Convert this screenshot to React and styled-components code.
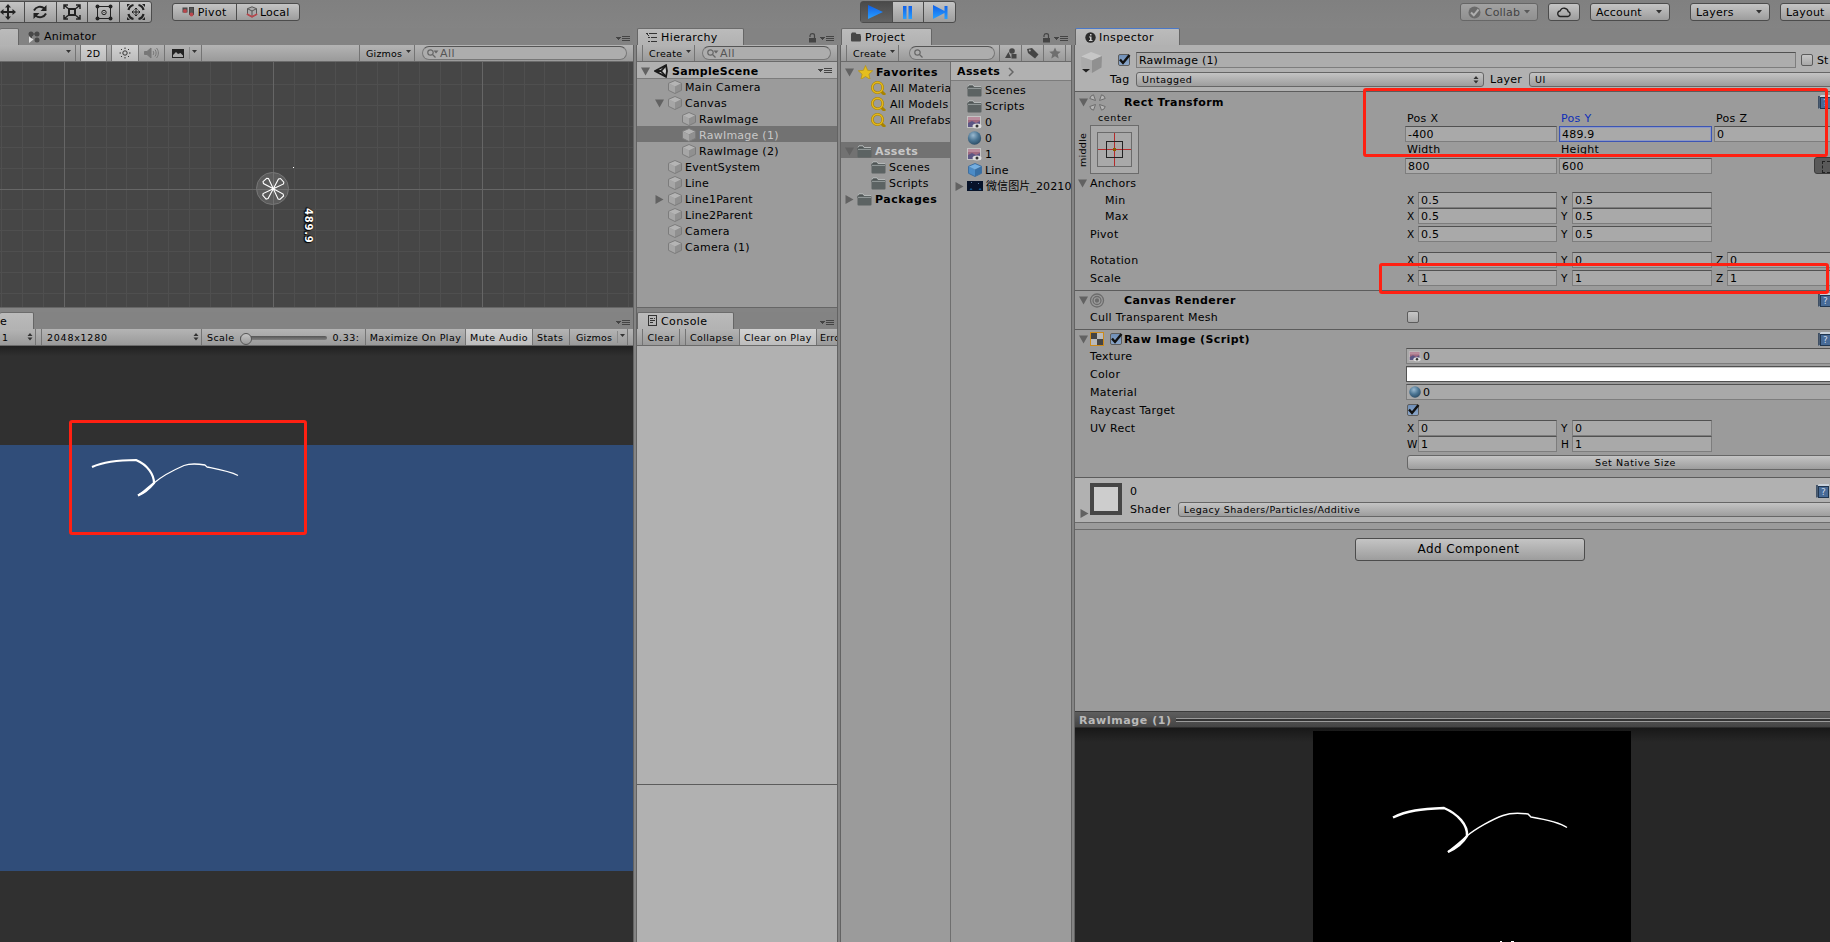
import styled, { createGlobalStyle, css } from "styled-components";

const FONT = '"DejaVu Sans", "Noto Sans CJK SC", sans-serif';

function App() {
  return (
    <>
      <GlobalStyle />
      <Editor>
        <TopBar />
        <Workspace>
          <LeftColumn>
            <SceneView />
            <GameView />
          </LeftColumn>
          <MiddleColumn>
            <Hierarchy />
            <Console />
          </MiddleColumn>
          <Project />
          <Inspector />
        </Workspace>
        <RedBox $x={69} $y={420} $w={238} $h={115} />
        <RedBox $x={1363} $y={88} $w={465} $h={69} />
        <RedBox $x={1379} $y={263} $w={450} $h={31} />
      </Editor>
    </>
  );
}

export default App;

/* ---------- top bar ---------- */

function TopBar() {
  return (
    <TopBarRow>
      <ButtonGroup $h={22} $w={160} $ml={-8}>
        <ToolButton><MoveIcon /></ToolButton>
        <ToolButton><RotateIcon /></ToolButton>
        <ToolButton><ScaleIcon /></ToolButton>
        <ToolButton><RectIcon /></ToolButton>
        <ToolButton><TransformIcon /></ToolButton>
      </ButtonGroup>
      <ButtonGroup $h={18} $w={128} $ml={20}>
        <ToolButton>
          <PivotIcon />
          <Text $ls={0.4}>Pivot</Text>
        </ToolButton>
        <ToolButton $tight>
          <LocalIcon />
          <Text $ls={0.2}>Local</Text>
        </ToolButton>
      </ButtonGroup>
      <ButtonGroup $h={22} $w={96} $ml={560}>
        <ToolButton $on><PlayIcon kind="play" /></ToolButton>
        <ToolButton><PlayIcon kind="pause" /></ToolButton>
        <ToolButton><PlayIcon kind="step" /></ToolButton>
      </ButtonGroup>
      <ButtonGroup $h={18} $w={78} $ml={504} $faded>
        <ToolButton>
          <CheckCircle />
          <Text $ls={0.2}>Collab</Text>
          <Caret />
        </ToolButton>
      </ButtonGroup>
      <ButtonGroup $h={18} $w={32} $ml={10}>
        <ToolButton><CloudIcon /></ToolButton>
      </ButtonGroup>
      <DropButton $w={80} $ml={10}><Text $ls={0.2}>Account</Text><Caret /></DropButton>
      <DropButton $w={80} $ml={20}><Text $ls={0.2}>Layers</Text><Caret /></DropButton>
      <DropButton $w={80} $ml={10}><Text $ls={0.2}>Layout</Text><Caret /></DropButton>
    </TopBarRow>
  );
}

/* ---------- scene + game ---------- */

function SceneView() {
  return (
    <Pane $h={280}>
      <TabRow>
        <Tab $w={19} />
        <LooseTab>
          <AnimatorIcon />
          <Text $ls={0.2}>Animator</Text>
        </LooseTab>
        <PaneMenu />
      </TabRow>
      <Toolbar>
        <BarCell $w={76} $end><Caret small /></BarCell>
        <BarCell $w={5} />
        <BarCell $w={26} $on><Small $ls={0.4}>2D</Small></BarCell>
        <BarCell $w={5} />
        <BarCell $w={27} $on><SunIcon /></BarCell>
        <BarCell $w={26}><SpeakerIcon /></BarCell>
        <BarCell $w={37} $pl={7}><PictureIcon /><Divider /><Caret small tight /></BarCell>
        <BarCell $w={158} />
        <BarCell $w={55} $pl={6}><Small $ls={0.2}>Gizmos</Small><Caret small /></BarCell>
        <Search $w={205} $ml={7}><Magnifier menu /><Faint>All</Faint></Search>
      </Toolbar>
      <SceneCanvas>
        <SceneGrid />
        <Measure>489.9</Measure>
      </SceneCanvas>
    </Pane>
  );
}

function SceneGrid() {
  const cols = Array.from({ length: 31 }, (_, i) => Math.round(1 + i * 20.9));
  const rows = Array.from({ length: 12 }, (_, i) => Math.round(22 + i * 20.9));
  return (
    <svg width="633" height="245" shapeRendering="crispEdges">
      {cols.map((x) => (
        <rect key={x} x={x} y="0" width="1" height="245" fill="#4f4f4f" />
      ))}
      {rows.map((y) => (
        <rect key={y} x="0" y={y} width="633" height="1" fill="#4f4f4f" />
      ))}
      {[64, 273, 482].map((x) => (
        <rect key={x} x={x} y="0" width="1" height="245" fill="#666" />
      ))}
      <rect x="0" y="127" width="633" height="1" fill="#666" />
      <rect x="293" y="105" width="1" height="1" fill="#fff" />
      <g shapeRendering="auto">
        <circle cx="272.5" cy="126.500" r="16" fill="#8a8a8a55" stroke="#777" />
        {[0, 90, 180, 270].map((a) => (
          <path
            key={a}
            transform={`rotate(${a} 273.300 126.800)`}
            d="M273.300 126.800L278.500 117L280.500 116.500L283.800 120.200L283.500 122Z"
            fill="none"
            stroke="#fff"
            strokeWidth="1.100"
          />
        ))}
      </g>
    </svg>
  );
}

function GameView() {
  return (
    <Pane $grow $gap={4}>
      <TabRow>
        <Tab $w={34}><Text>e</Text></Tab>
        <PaneMenu />
      </TabRow>
      <Toolbar>
        <BarCell $w={36} $pl={2}><Small>1</Small><Push /><UpDown /></BarCell>
        <BarCell $w={6} />
        <BarCell $w={160} $pl={5}><Small $ls={0.75}>2048x1280</Small><Push /><UpDown /></BarCell>
        <BarCell $w={164} $pl={5}>
          <Small $ls={0.4}>Scale</Small>
          <Slider />
          <Small $ls={0.5}>0.33:</Small>
        </BarCell>
        <BarCell $w={100}><Small $ls={0.45}>Maximize On Play</Small></BarCell>
        <BarCell $w={67} $on><Small $ls={0.4}>Mute Audio</Small></BarCell>
        <BarCell $w={37} $pl={4}><Small $ls={0.4}>Stats</Small></BarCell>
        <BarCell $w={58} $pl={6}><Small $ls={0.2}>Gizmos</Small><Divider /><Caret small tight /></BarCell>
      </Toolbar>
      <GameCanvas>
        <GameScreen>
          <svg width="633" height="426" fill="none" stroke="#fff">
            <path strokeWidth="2.200" d="M92 22C103 17 115 15 136 15C148 20 154 30 154 38C149 44 144 48 138 50.500" />
            <path strokeWidth="1.800" d="M138 50.500C146 46 149 41 154 38" />
            <path strokeWidth="1.300" d="M154 38C162 31 176 24 184 20.500C191 18 199 19 205 20L207 22C217 24 229 26 238 30.500" />
          </svg>
        </GameScreen>
      </GameCanvas>
    </Pane>
  );
}

/* ---------- hierarchy + console ---------- */

const objects = [
  { name: "Main Camera", depth: 0 },
  { name: "Canvas", depth: 0, fold: "open" },
  { name: "RawImage", depth: 1 },
  { name: "RawImage (1)", depth: 1, selected: true },
  { name: "RawImage (2)", depth: 1 },
  { name: "EventSystem", depth: 0 },
  { name: "Line", depth: 0 },
  { name: "Line1Parent", depth: 0, fold: "closed" },
  { name: "Line2Parent", depth: 0 },
  { name: "Camera", depth: 0 },
  { name: "Camera (1)", depth: 0 },
];

function Hierarchy() {
  return (
    <Pane $h={280}>
      <TabRow>
        <Tab $w={107} $pl={8}><HierarchyIcon /><Text $ls={0.4}>Hierarchy</Text></Tab>
        <LockIcon />
        <PaneMenu inline />
      </TabRow>
      <Toolbar>
        <BarCell $w={6} />
        <BarCell $w={52} $pl={6}><Small $ls={0.3}>Create</Small><Caret small /></BarCell>
        <Search $w={129} $ml={7}><Magnifier menu /><Faint>All</Faint></Search>
      </Toolbar>
      <SceneRow>
        <Fold open />
        <UnityIcon />
        <Text $bold $ls={0.3}>SampleScene</Text>
        <Push />
        <MenuIcon />
      </SceneRow>
      <List>
        {objects.map((o) => (
          <ListRow key={o.name} $pl={18 + o.depth * 14} $selected={o.selected}>
            <FoldSlot $w={13}>{o.fold && <Fold open={o.fold === "open"} />}</FoldSlot>
            <CubeIcon />
            <Text $ls={0.25}>{o.name}</Text>
          </ListRow>
        ))}
      </List>
    </Pane>
  );
}

function Console() {
  return (
    <Pane $grow $gap={4}>
      <TabRow>
        <Tab $w={97} $pl={10}><ConsoleIcon /><Text $ls={0.4}>Console</Text></Tab>
        <PaneMenu />
      </TabRow>
      <Toolbar>
        <BarCell $w={6} />
        <BarCell $w={37}><Small $ls={0.45}>Clear</Small></BarCell>
        <BarCell $w={6} />
        <BarCell $w={54} $pl={4}><Small $ls={0.4}>Collapse</Small></BarCell>
        <BarCell $w={77} $pl={4} $on><Small $ls={0.4}>Clear on Play</Small></BarCell>
        <BarCell $w={30} $pl={3}><Small $ls={0.3}>Error</Small></BarCell>
      </Toolbar>
      <ConsoleLog />
      <ConsoleDetail />
    </Pane>
  );
}

/* ---------- project ---------- */

function Project() {
  return (
    <ProjectColumn>
      <TabRow>
        <Tab $w={91} $pl={8}><FolderIcon dark /><Text $ls={0.35}>Project</Text></Tab>
        <LockIcon />
        <PaneMenu inline />
      </TabRow>
      <Toolbar>
        <BarCell $w={6} />
        <BarCell $w={52} $pl={6}><Small $ls={0.3}>Create</Small><Caret small /></BarCell>
        <Search $w={86} $ml={10}><Magnifier /></Search>
        <BarCell $w={5} />
        <BarCell $w={22}><ShapesIcon /></BarCell>
        <BarCell $w={22}><TagIcon /></BarCell>
        <BarCell $w={22}><StarIcon fill="#6f6f6f" size={12} /></BarCell>
      </Toolbar>
      <ProjectBody>
        <Tree>
          <ListRow $pl={4}>
            <FoldSlot $w={13}><Fold open /></FoldSlot>
            <StarIcon fill="#e5be1e" size={15} />
            <Text $bold $ls={0.5}>Favorites</Text>
          </ListRow>
          {["All Materials", "All Models", "All Prefabs"].map((t) => (
            <ListRow key={t} $pl={29}><SearchGold /><Text $ls={0.25}>{t}</Text></ListRow>
          ))}
          <TreeGap />
          <ListRow $pl={4} $selected>
            <FoldSlot $w={12}><Fold open /></FoldSlot>
            <FolderIcon />
            <Text $bold $ls={0.4}>Assets</Text>
          </ListRow>
          <ListRow $pl={30}><FolderIcon /><Text $ls={0.3}>Scenes</Text></ListRow>
          <ListRow $pl={30}><FolderIcon /><Text $ls={0.3}>Scripts</Text></ListRow>
          <ListRow $pl={4}>
            <FoldSlot $w={12}><Fold /></FoldSlot>
            <FolderIcon />
            <Text $bold $ls={0.5}>Packages</Text>
          </ListRow>
        </Tree>
        <Files>
          <Crumb>
            <Text $bold $ls={0.4}>Assets</Text>
            <svg width="6" height="10" fill="none" stroke="#666" strokeWidth="1.500"><path d="M1 1L5 5L1 9" /></svg>
          </Crumb>
          <ListRow $pl={16}><FolderIcon /><Text $ls={0.3}>Scenes</Text></ListRow>
          <ListRow $pl={16}><FolderIcon /><Text $ls={0.3}>Scripts</Text></ListRow>
          <ListRow $pl={16}><TextureIcon /><Text>0</Text></ListRow>
          <ListRow $pl={16}><SphereIcon /><Text>0</Text></ListRow>
          <ListRow $pl={16}><TextureIcon /><Text>1</Text></ListRow>
          <ListRow $pl={17}><CubeIcon blue /><Text $ls={0.2}>Line</Text></ListRow>
          <ListRow $pl={4}>
            <FoldSlot $w={12}><Fold /></FoldSlot>
            <NightIcon />
            <Text $ls={0.1}>微信图片_20210</Text>
          </ListRow>
        </Files>
      </ProjectBody>
    </ProjectColumn>
  );
}

/* ---------- inspector ---------- */

function Axis({ label, value }) {
  return (
    <AxisCell>
      <AxisName>{label}</AxisName>
      <Field>{value}</Field>
    </AxisCell>
  );
}

function Vector({ name, labels = ["X", "Y"], values, mt, indent }) {
  return (
    <PropRow $mt={mt}>
      <PropName $indent={indent}>{name}</PropName>
      {labels.map((l, i) => <Axis key={l} label={l} value={values[i]} />)}
    </PropRow>
  );
}

function Inspector() {
  return (
    <InspectorColumn>
      <TabRow>
        <Tab $w={105} $pl={9} $active><InfoIcon /><Text $ls={0.4}>Inspector</Text></Tab>
      </TabRow>
      <ObjectHeader>
        <BigCube />
        <HeaderRows>
          <HeaderRow $h={16}>
            <Check on />
            <NameField>RawImage (1)</NameField>
            <Check />
            <StaticLabel>St</StaticLabel>
          </HeaderRow>
          <HeaderRow $h={15}>
            <TagName>Tag</TagName>
            <Select $w={348}>Untagged<Push /><UpDown /></Select>
            <TagName $mid>Layer</TagName>
            <Select $w={310}>UI</Select>
          </HeaderRow>
        </HeaderRows>
      </ObjectHeader>

      <Section $h={199}>
        <SectionTitle $h={20}>
          <Fold open />
          <RectTransformIcon />
          <Title>Rect Transform</Title>
          <HelpIcon />
        </SectionTitle>
        <RectLayout>
          <AnchorPreset>
            <Small $ls={0.6}>center</Small>
            <AnchorRow>
              <Upright>middle</Upright>
              <AnchorBox />
            </AnchorRow>
          </AnchorPreset>
          <RectFields>
            <FieldNames><span>Pos X</span><Blue>Pos Y</Blue><span>Pos Z</span></FieldNames>
            <FieldLine><Field>-400</Field><Field $focus>489.9</Field><Field>0</Field></FieldLine>
            <FieldNames><span>Width</span><span>Height</span></FieldNames>
            <FieldLine>
              <Field>800</Field>
              <Field>600</Field>
              <BlueprintSlot><BlueprintButton /></BlueprintSlot>
            </FieldLine>
          </RectFields>
        </RectLayout>
        <AnchorsTitle><Fold open /><Text $ls={0.25}>Anchors</Text></AnchorsTitle>
        <Vector name="Min" indent values={["0.5", "0.5"]} />
        <Vector name="Max" indent values={["0.5", "0.5"]} />
        <Vector name="Pivot" mt={2} values={["0.5", "0.5"]} />
        <Vector name="Rotation" mt={10} labels={["X", "Y", "Z"]} values={["0", "0", "0"]} />
        <Vector name="Scale" mt={2} labels={["X", "Y", "Z"]} values={["1", "1", "1"]} />
      </Section>

      <Section $h={39}>
        <SectionTitle $h={18}>
          <Fold open />
          <RendererIcon />
          <Title>Canvas Renderer</Title>
          <HelpIcon />
        </SectionTitle>
        <PropRow><PropName>Cull Transparent Mesh</PropName><CheckSlot><Check /></CheckSlot></PropRow>
      </Section>

      <Section $h={148}>
        <SectionTitle $h={18}>
          <Fold open />
          <RawImageIcon />
          <CheckInline><Check on /></CheckInline>
          <Title>Raw Image (Script)</Title>
          <HelpIcon />
        </SectionTitle>
        <PropRow><PropName>Texture</PropName><ObjectField><TextureIcon small />0</ObjectField></PropRow>
        <PropRow $mt={2}><PropName>Color</PropName><ColorField /></PropRow>
        <PropRow $mt={2}><PropName>Material</PropName><ObjectField><SphereIcon small />0</ObjectField></PropRow>
        <PropRow $mt={2}><PropName>Raycast Target</PropName><CheckSlot><Check on /></CheckSlot></PropRow>
        <Vector name="UV Rect" mt={2} values={["0", "0"]} />
        <Vector name="" labels={["W", "H"]} values={["1", "1"]} />
        <PropRow $mt={2}><PropName /><WideButton><Small $ls={0.6}>Set Native Size</Small></WideButton></PropRow>
      </Section>

      <MaterialSection>
        <FoldLow><Fold /></FoldLow>
        <Swatch />
        <MaterialRows>
          <HeaderRow $h={16}><Text>0</Text><Push /><HelpIcon inset /></HeaderRow>
          <HeaderRow $h={15}><Text $ls={0.3}>Shader</Text><Select $w={656} $ml={7}>Legacy Shaders/Particles/Additive</Select></HeaderRow>
        </MaterialRows>
      </MaterialSection>
      <Rule />
      <AddArea>
        <AddButton>Add Component</AddButton>
      </AddArea>

      <PreviewBar>
        <PreviewTitle>RawImage (1)</PreviewTitle>
        <Grip />
      </PreviewBar>
      <PreviewBody>
        <PreviewImage>
          <svg width="318" height="211" fill="none" stroke="#fff">
            <path strokeWidth="2.400" d="M80 86.500C94 79.500 108 78 131 77C145 83 155 94 154 105C150 112 144 117 135 121" />
            <path strokeWidth="2" d="M135 121C143 115 148 111 154 105" />
            <path strokeWidth="1.400" d="M154 105C162 98 180 88 190 84.500C198 81.500 208 82 215 83L218 86C230 88 246 91 254 96.500" />
            <path strokeWidth="1" d="M187 210.500H189M198 210.500H201" />
          </svg>
        </PreviewImage>
      </PreviewBody>
    </InspectorColumn>
  );
}

/* ---------- icons ---------- */

function MoveIcon() {
  return (
    <svg width="16" height="16" fill="#222">
      <path d="M8 0L11 3.500H9V7H12.500V5L16 8L12.500 11V9H9V12.500H11L8 16L5 12.500H7V9H3.500V11L0 8L3.500 5V7H7V3.500H5Z" />
    </svg>
  );
}

function RotateIcon() {
  return (
    <svg width="16" height="16" fill="none" stroke="#222" strokeWidth="2">
      <path d="M2 6.500C4 2.500 9 1.500 12.500 4.500M14 9.500C12 13.500 7 14.500 3.500 11.500" />
      <path fill="#222" stroke="none" d="M14.500 1V7H8.500ZM1.500 15V9H7.500Z" />
    </svg>
  );
}

function ScaleIcon() {
  return (
    <svg width="18" height="16" fill="none" stroke="#222">
      <rect x="6" y="5" width="6" height="6" strokeWidth="2" />
      <path strokeWidth="1.500" d="M1 5V1H5M1 1L5 4.500M13 1H17V5M17 1L13 4.500M1 11V15H5M1 15L5 11.500M17 11V15H13M17 15L13 11.500" />
    </svg>
  );
}

function RectIcon() {
  return (
    <svg width="18" height="17" fill="none" stroke="#222">
      <path d="M3 2.500H15M3 14.500H15M2.500 3V14M15.500 3V14" />
      <circle cx="9" cy="8.500" r="2.200" />
      <g fill="#222" stroke="none">
        <circle cx="2.500" cy="2.500" r="2" /><circle cx="15.500" cy="2.500" r="2" />
        <circle cx="2.500" cy="14.500" r="2" /><circle cx="15.500" cy="14.500" r="2" />
      </g>
      <rect x="8.500" y="8" width="1" height="1" fill="#222" stroke="none" />
    </svg>
  );
}

function TransformIcon() {
  return (
    <svg width="20" height="18" fill="none" stroke="#222">
      <path strokeWidth="2.200" d="M2.500 7C3 4.500 5 2.500 7.500 2M12.500 2C15 2.500 17 4.500 17.500 7M17.500 11C17 13.500 15 15.500 12.500 16M7.500 16C5 15.500 3 13.500 2.500 11" />
      <path fill="#222" stroke="none" d="M1 1H4L1 4ZM19 1H16L19 4ZM1 17H4L1 14ZM19 17H16L19 14Z" />
      <path d="M10 5V13M6 9H14M8.500 6.500L10 5L11.500 6.500M8.500 11.500L10 13L11.500 11.500M7.500 7.500L6 9L7.500 10.500M12.500 7.500L14 9L12.500 10.500" />
    </svg>
  );
}

function PivotIcon() {
  return (
    <svg width="12" height="10">
      <rect x="1" y="1" width="4" height="4" fill="#555" stroke="#444" />
      <rect x="7.500" y=".5" width="4" height="7" fill="#555" stroke="#444" />
      <circle cx="3" cy="4" r="2" fill="#b8474d" />
      <circle cx="9.500" cy="7.500" r="2" fill="#b8474d" />
    </svg>
  );
}

function LocalIcon() {
  return (
    <svg width="12" height="12" fill="none" stroke="#555">
      <path fill="#aaa" d="M6 .8L10.500 2.700V8.500L6 11L1.500 8.500V2.700Z" />
      <path d="M1.500 2.700L6 5L10.500 2.700M6 5V11" />
      <path stroke="#b8474d" strokeWidth="1.600" d="M.8 8L6 10.800L11.200 8" />
    </svg>
  );
}

function PlayIcon({ kind }) {
  return (
    <svg width="18" height="16">
      <defs>
        <linearGradient id={kind} x2="0" y2="1">
          <stop offset="0" stopColor="#0f5fe8" />
          <stop offset="1" stopColor="#2aa0ff" />
        </linearGradient>
      </defs>
      {kind === "play" && <path fill={`url(#${kind})`} d="M1 1V15L16 8Z" />}
      {kind === "pause" && <path fill={`url(#${kind})`} d="M4 2H7.500V15H4ZM9.500 2H13V15H9.500Z" />}
      {kind === "step" && <path fill={`url(#${kind})`} d="M2 1V15L13.500 9V15H16.500V2H13.500V7Z" />}
    </svg>
  );
}

function CheckCircle() {
  return (
    <svg width="13" height="13">
      <circle cx="6.500" cy="6.500" r="6" fill="#555" />
      <path d="M3 6.500L5.800 9.300L10.500 3.500" fill="none" stroke="#ddd" strokeWidth="2" />
    </svg>
  );
}

function CloudIcon() {
  return (
    <svg width="16" height="12" fill="none" stroke="#222" strokeWidth="1.300">
      <path d="M4 10.500H12A2.500 2.500 0 0 0 12.200 5.600A4.200 4.200 0 0 0 4.200 4.800A2.900 2.900 0 0 0 4 10.500Z" />
    </svg>
  );
}

function Caret({ small, tight }) {
  return (
    <CaretSvg width={small ? 5 : 6} height="4" $up={small} $tight={tight}>
      <path fill="#333" d={small ? "M0 0H5L2.500 3Z" : "M0 0H6L3 3.500Z"} />
    </CaretSvg>
  );
}

function UpDown() {
  return (
    <svg width="6" height="8" fill="#333"><path d="M3 0L5.500 3H.5ZM3 7.500L5.500 4.500H.5Z" /></svg>
  );
}

function MenuIcon() {
  return (
    <svg width="14" height="7" shapeRendering="crispEdges" fill="#444">
      <path d="M0 1H5L2.500 4ZM6 0H14V1H6ZM6 2H14V3H6ZM6 4H14V5H6Z" />
    </svg>
  );
}

function PaneMenu({ inline }) {
  return <MenuSlot $inline={inline}><MenuIcon /></MenuSlot>;
}

function LockIcon() {
  return (
    <LockSvg width="9" height="10">
      <path d="M2 4V2.500C2.500 0 6.500 0 6.500 2.500V5" fill="none" stroke="#444" strokeWidth="1.200" />
      <rect x="1" y="5" width="7" height="4.500" fill="#444" />
    </LockSvg>
  );
}

function AnimatorIcon() {
  return (
    <svg width="12" height="12" fill="#484848">
      <circle cx="3" cy="3" r="2.500" /><circle cx="9" cy="3" r="2.500" /><circle cx="9" cy="9" r="2.500" />
      <path d="M2 4H4V9H2ZM3 2.500H9V3.500H3Z" />
      <path d="M1 5.500L5.500 8.500L1 12Z" fill="#ddd" />
    </svg>
  );
}

function SunIcon() {
  return (
    <svg width="12" height="12" fill="none" stroke="#333">
      <circle cx="6" cy="6" r="2.200" />
      <path d="M6 .5V2M6 10V11.500M.5 6H2M10 6H11.500M2 2L3 3M9 9L10 10M10 2L9 3M3 9L2 10" />
    </svg>
  );
}

function SpeakerIcon() {
  return (
    <svg width="15" height="12" fill="none" stroke="#777">
      <path fill="#777" d="M.5 4.500H3L7 1V11L3 7.500H.5Z" />
      <path d="M9 4C10 5 10 7 9 8M11 2.500C12.500 4.500 12.500 7.500 11 9.500M12.500 1C15 4 15 8 12.500 11" />
    </svg>
  );
}

function PictureIcon() {
  return (
    <svg width="12" height="9">
      <rect width="12" height="9" fill="#222" />
      <path d="M1 8V6L4 3L6 5L8.500 4L11 6.500V8Z" fill="#aaa" />
    </svg>
  );
}

function Magnifier({ menu }) {
  return (
    <svg width={menu ? 12 : 10} height="9" fill="none" stroke="#666" strokeWidth="1.200">
      <circle cx="3.500" cy="3.500" r="2.700" />
      <path d="M5.500 5.500L8.500 8.500" />
      {menu && <path d="M6.500 1.500H11.500L9 4.500Z" fill="#666" stroke="none" />}
    </svg>
  );
}

function HierarchyIcon() {
  return (
    <svg width="12" height="9" shapeRendering="crispEdges" fill="#333">
      <path d="M0 0H2V1H0ZM3 0H11V1H3ZM2 4H4V5H2ZM5 4H11V5H5ZM2 8H4V9H2ZM5 8H11V9H5ZM1 1H2V2H1ZM2 2H3V3H2Z" />
    </svg>
  );
}

function ConsoleIcon() {
  return (
    <svg width="10" height="12" fill="none" stroke="#333" shapeRendering="crispEdges">
      <rect x=".5" y=".5" width="8" height="10" />
      <path d="M2 3.500H5M2 5.500H7M2 7.500H5M6 3.500H7" />
    </svg>
  );
}

function Fold({ open }) {
  return (
    <svg width="9" height="9" fill="#626262">
      <path d={open ? "M0 .5H9L4.500 8.500Z" : "M.5 0V9L8.500 4.500Z"} />
    </svg>
  );
}

function CubeIcon({ blue }) {
  const c = blue ? ["#74aee0", "#4b8bc6", "#376fa5", "#3f6f9f"] : ["#b4b4b4", "#a6a6a6", "#909090", "#7c7c7c"];
  return (
    <svg width="14" height="14">
      <path d="M7 .5L13.500 3.300L7 6.500L.5 3.300Z" fill={c[0]} />
      <path d="M.5 3.300L7 6.500V13.500L.5 10.300Z" fill={c[1]} />
      <path d="M13.500 3.300L7 6.500V13.500L13.500 10.300Z" fill={c[2]} />
      <path d="M7 .5L13.500 3.300V10.300L7 13.500L.5 10.300V3.300Z" fill="none" stroke={c[3]} />
    </svg>
  );
}

function UnityIcon() {
  return (
    <svg width="14" height="14" fill="none" stroke="#1a1a1a" strokeWidth="1.800">
      <path d="M1 7L12 1.200L13 7L12 12.800Z" fill="#ccc" />
      <path d="M1 7H7L12 1.500M7 7L12 12.500" />
    </svg>
  );
}

function FolderIcon({ dark }) {
  return dark ? (
    <svg width="12" height="10" fill="#474747"><path d="M1 2L2 .5H5.500L6.500 2H10.500V3H3L1 9Z" /><rect x="1" y="3" width="10" height="6.500" rx="1" /></svg>
  ) : (
    <svg width="15" height="13">
      <path d="M.5 3L1.500 1H6L7 2.500H13.500V5H.5Z" fill="#4f5555" />
      <rect x=".5" y="3" width="14" height="9.500" rx="1" fill="#5c6363" />
      <path d="M1 4.500H14" stroke="#8f9696" />
      <path d="M1 2.500L2 .8H6L7 2.500H14" fill="none" stroke="#b4b8b8" />
    </svg>
  );
}

function ShapesIcon() {
  return (
    <svg width="12" height="11" fill="#454545">
      <circle cx="7" cy="3" r="2.800" /><path d="M0 10L3.500 4L6 10Z" /><rect x="6.500" y="6" width="5" height="4.500" />
    </svg>
  );
}

function TagIcon() {
  return (
    <svg width="12" height="11" fill="#454545">
      <path d="M0 1L5 0L11.500 6.500L8 10.500L1 5Z" /><circle cx="2.800" cy="2.500" r="1" fill="#aaa" />
    </svg>
  );
}

function StarIcon({ fill, size }) {
  return (
    <svg width={size} height={size} viewBox="0 0 14 14">
      <path d="M7 .5L9 5L13.700 5.400L10.200 8.600L11.300 13.400L7 10.800L2.700 13.400L3.800 8.600L.3 5.400L5 5Z" fill={fill} stroke={size > 12 ? "#b4921a" : "none"} strokeWidth=".7" />
    </svg>
  );
}

function SearchGold() {
  return (
    <svg width="17" height="15" fill="none">
      <path d="M10.500 9.500L15 14" stroke="#a88300" strokeWidth="3" />
      <circle cx="7.500" cy="6.500" r="5.200" stroke="#a88300" strokeWidth="2.600" />
      <circle cx="7.500" cy="6.500" r="5.200" stroke="#e3b71b" strokeWidth="1.400" />
    </svg>
  );
}

function TextureIcon({ small }) {
  return (
    <svg width={small ? 12 : 15} height={small ? 11 : 13} viewBox="0 0 15 13">
      <rect x=".5" y=".5" width="13" height="11" fill="#a06a80" stroke="#c3c3c3" />
      <path d="M1 1H13V4H1Z" fill="#b98c9c" />
      <path d="M1 7L5 5L9 7L13 5V11H1Z" fill="#5c5684" />
      <ellipse cx="10" cy="10" rx="4.500" ry="2.500" fill="#ddd" />
      <circle cx="10" cy="10" r="1.500" fill="#333" />
    </svg>
  );
}

function SphereIcon({ small }) {
  return (
    <svg width={small ? 12 : 15} height={small ? 12 : 14} viewBox="0 0 14 14">
      <defs>
        <radialGradient id="ball" cx=".4" cy=".3" r=".8">
          <stop offset="0" stopColor="#9ab9d0" /><stop offset=".5" stopColor="#4b7593" /><stop offset="1" stopColor="#24435b" />
        </radialGradient>
      </defs>
      <circle cx="7" cy="7" r="6.700" fill="url(#ball)" />
    </svg>
  );
}

function NightIcon() {
  return (
    <svg width="16" height="10">
      <rect width="16" height="10" fill="#071329" />
      <path d="M3 9L4 7.500L5 9M12 9L13 7.500L14 9" stroke="#16639f" fill="none" />
      <rect x="4" y="1" width="1" height="1" fill="#5a7ba0" /><rect x="11" y="2" width="1" height="1" fill="#5a7ba0" />
    </svg>
  );
}

function InfoIcon() {
  return (
    <svg width="11" height="11">
      <circle cx="5.500" cy="5.500" r="5.200" fill="#2c2c2c" />
      <path d="M5 2H6.500V3.500H5ZM4 4.500H6.500V8H7.500V9H4V8H5V5.500H4Z" fill="#ccc" />
    </svg>
  );
}

function BigCube() {
  return (
    <BigCubeSvg width="23" height="23">
      <path d="M11 0L22 4L12 8.500L1 4.500Z" fill="#c6c6c6" />
      <path d="M1 4.500L12 8.500V21L1.500 15.500Z" fill="#aaa" />
      <path d="M22 4L12 8.500V21L21.500 15.500Z" fill="#909090" />
      <path d="M2 17H10L6 20.500Z" fill="#222" />
    </BigCubeSvg>
  );
}

function Check({ on }) {
  return (
    <CheckBox $on={on}>
      {on && <svg width="13" height="12" fill="none" stroke="#111" strokeWidth="2.400"><path d="M2 5.500L5 9L11.500 1" /></svg>}
    </CheckBox>
  );
}

function RectTransformIcon() {
  return (
    <svg width="17" height="17" fill="#b5b5b5" stroke="#6c6c6c">
      {[0, 90, 180, 270].map((a) => (
        <path key={a} transform={`rotate(${a} 8.500 8.500)`} d="M6.500 6.500L.8 4.500L2 2L4.500 .8Z" />
      ))}
    </svg>
  );
}

function RendererIcon() {
  return (
    <svg width="16" height="15" fill="none" stroke="#6c6c6c" strokeWidth="1.300">
      <circle cx="8" cy="7.500" r="6.500" /><circle cx="8" cy="7.500" r="4" /><circle cx="8" cy="7.500" r="1.500" fill="#6c6c6c" />
    </svg>
  );
}

function RawImageIcon() {
  return (
    <svg width="16" height="14" shapeRendering="crispEdges">
      <rect x="1.500" y=".5" width="13" height="13" fill="#b9b9b9" stroke="#cd8a1a" />
      <path d="M2 1H8V7H14V13H8V7H2Z" fill="#444" />
    </svg>
  );
}

function HelpIcon({ inset }) {
  return (
    <HelpSlot $inset={inset}>
      <svg width="13" height="14">
        <path d="M1 2L3 0H13V12L11 14H1Z" fill="#c9d1da" />
        <rect x="2.500" y="2.500" width="10" height="11" fill="#476a96" stroke="#203650" />
        <path d="M1 1V13.500" stroke="#203650" strokeWidth="1.500" />
      </svg>
      <HelpMark>?</HelpMark>
    </HelpSlot>
  );
}

function AnchorBox() {
  return (
    <svg width="49" height="49" fill="none" shapeRendering="crispEdges">
      <rect x=".5" y=".5" width="48" height="48" fill="#a9a9a9" stroke="#6b6b6b" />
      <rect x="7.500" y="7.500" width="34" height="34" stroke="#6b6b6b" />
      <path d="M24.500 8V41M8 24.500H41" stroke="#b52a2a" />
      <rect x="16.500" y="16.500" width="16" height="16" stroke="#222" />
      <rect x="23" y="23" width="3" height="3" fill="#8a5a00" />
    </svg>
  );
}

/* ---------- styles ---------- */

const GlobalStyle = createGlobalStyle`
  * { box-sizing: border-box; }
  body {
    margin: 0;
    overflow: hidden;
    background: #828282;
    font-family: ${FONT};
    font-size: 11px;
    color: #000;
  }
  svg { flex: none; display: block; }
`;

const Editor = styled.div`
  position: relative;
  width: 1830px;
  height: 942px;
  overflow: hidden;
  display: flex;
  flex-direction: column;
  background: linear-gradient(#808080, #848484 30px);
`;

const Workspace = styled.div`
  flex: 1;
  display: flex;
  gap: 4px;
  min-height: 0;
  background: linear-gradient(
    90deg,
    transparent 633px,
    #636363 633px 634px,
    transparent 634px 636px,
    #636363 636px 637px,
    transparent 637px 837px,
    #636363 837px 838px,
    transparent 838px 840px,
    #636363 840px 841px,
    transparent 841px 1071px,
    #636363 1071px 1072px,
    transparent 1072px 1074px,
    #636363 1074px 1075px,
    transparent 1075px
  ) 0 17px no-repeat;
`;

const column = css`
  flex: none;
  display: flex;
  flex-direction: column;
`;

const LeftColumn = styled.div`
  ${column}
  width: 633px;
`;

const MiddleColumn = styled.div`
  ${column}
  width: 200px;
`;

const ProjectColumn = styled.div`
  ${column}
  width: 230px;
`;

const InspectorColumn = styled.div`
  ${column}
  width: 755px;
  background: linear-gradient(#838383 17px, #9b9b9b 17px);
`;

const Pane = styled.section`
  display: flex;
  flex-direction: column;
  overflow: hidden;
  min-height: 0;
  height: ${(p) => (p.$h ? p.$h + "px" : "auto")};
  flex: ${(p) => (p.$grow ? 1 : "none")};
  margin-top: ${(p) => p.$gap || 0}px;
  background: linear-gradient(#838383 17px, #9b9b9b 17px);
`;

const RedBox = styled.div`
  position: absolute;
  left: ${(p) => p.$x}px;
  top: ${(p) => p.$y}px;
  width: ${(p) => p.$w}px;
  height: ${(p) => p.$h}px;
  border: 3px solid #ff2012;
  border-radius: 3px;
`;

const Text = styled.span`
  white-space: nowrap;
  line-height: 14px;
  padding-top: 1px;
  font-size: 11px;
  font-weight: ${(p) => (p.$bold ? "bold" : "normal")};
  letter-spacing: ${(p) => p.$ls || 0}px;
`;

const Small = styled.span`
  white-space: nowrap;
  font-size: 9.500px;
  line-height: 13px;
  letter-spacing: ${(p) => p.$ls || 0}px;
`;

const Faint = styled.span`
  color: #555;
  letter-spacing: 0.4px;
`;

const Push = styled.i`
  flex: 1;
`;

const TopBarRow = styled.header`
  flex: none;
  height: 28px;
  display: flex;
  align-items: center;
  padding-bottom: 4px;
`;

const metal = css`
  background: linear-gradient(#c4c4c4, #9d9d9d);
  border: 1px solid #4c4c4c;
  border-radius: 3px;
`;

const ButtonGroup = styled.div`
  ${metal}
  flex: none;
  display: flex;
  width: ${(p) => p.$w}px;
  height: ${(p) => p.$h}px;
  margin-left: ${(p) => p.$ml}px;
  opacity: ${(p) => (p.$faded ? 0.5 : 1)};
`;

const ToolButton = styled.div`
  flex: 1 1 0;
  min-width: 0;
  display: flex;
  align-items: center;
  justify-content: center;
  gap: ${(p) => (p.$tight ? 2 : 4)}px;
  background: ${(p) => (p.$on ? "linear-gradient(#4a4a4a, #636363)" : "none")};
  & + & { border-left: 1px solid #4c4c4c; }
`;

const DropButton = styled.div`
  ${metal}
  flex: none;
  display: flex;
  align-items: center;
  justify-content: space-between;
  width: ${(p) => p.$w}px;
  height: 18px;
  margin-left: ${(p) => p.$ml}px;
  padding: 0 7px 0 5px;
`;

const CaretSvg = styled.svg`
  margin: ${(p) => (p.$tight ? "0 0 3px 2px" : p.$up ? "0 2px 3px 4px" : 0)};
`;

const TabRow = styled.div`
  flex: none;
  height: 17px;
  display: flex;
  align-items: center;
`;

const Tab = styled.div`
  display: flex;
  align-items: center;
  gap: 3px;
  height: 17px;
  width: ${(p) => p.$w}px;
  padding-left: ${(p) => p.$pl || 0}px;
  border: 1px solid #666;
  border-top-color: ${(p) => (p.$active ? "#4a78c8" : "#6c6c6c")};
  border-bottom: 0;
  border-left-width: ${(p) => (p.$pl ? 1 : 0)}px;
  border-radius: 2px 2px 0 0;
  background: linear-gradient(#bbb, #b2b2b2);
`;

const LooseTab = styled.div`
  display: flex;
  align-items: center;
  gap: 4px;
  padding-left: 9px;
`;

const MenuSlot = styled.span`
  margin: ${(p) => (p.$inline ? "5px 3px 0 3px" : "5px 3px 0 auto")};
`;

const LockSvg = styled.svg`
  margin-left: auto;
  margin-top: 2px;
`;

const Toolbar = styled.div`
  flex: none;
  display: flex;
  align-items: center;
  height: 17px;
  overflow: hidden;
  background: linear-gradient(#b4b4b4, #9a9a9a);
  border-bottom: 1px solid #6a6a6a;
`;

const BarCell = styled.div`
  flex: none;
  display: flex;
  align-items: center;
  justify-content: ${(p) => (p.$end ? "flex-end" : p.$pl ? "flex-start" : "center")};
  height: 16px;
  width: ${(p) => p.$w}px;
  padding-left: ${(p) => p.$pl || 0}px;
  padding-right: ${(p) => (p.$pl || p.$end ? 2 : 0)}px;
  border-right: 1px solid #747474;
  background: ${(p) => (p.$on ? "linear-gradient(#d2d2d2, #bcbcbc)" : "none")};
`;

const Divider = styled.i`
  width: 1px;
  height: 12px;
  margin-left: 5px;
  background: #8a8a8a;
`;

const Search = styled.div`
  flex: none;
  display: flex;
  align-items: center;
  gap: 1px;
  height: 14px;
  width: ${(p) => p.$w}px;
  margin-left: ${(p) => p.$ml}px;
  padding-left: 4px;
  border: 1px solid #777;
  border-top-color: #555;
  border-radius: 7px;
  background: #adadad;
`;

const SceneCanvas = styled.div`
  position: relative;
  flex: 1;
  background: #464646;
  border-bottom: 1px solid #666;
`;

const Measure = styled.div`
  position: absolute;
  left: 302px;
  top: 146px;
  writing-mode: vertical-rl;
  font-size: 10px;
  line-height: 12px;
  letter-spacing: 0.8px;
  font-weight: bold;
  color: #fff;
  text-shadow: 0 0 1px #000, 1px 1px 1px #000, -1px 1px 1px #000;
`;

const Slider = styled.div`
  flex: none;
  width: 87px;
  height: 4px;
  margin: 2px 6px 0 5px;
  border-radius: 2px;
  background: linear-gradient(#555, #808080);
  &::before {
    content: "";
    display: block;
    width: 10px;
    height: 10px;
    margin-top: -3px;
    border: 1px solid #555;
    border-radius: 50%;
    background: linear-gradient(#c4c4c4, #999);
  }
`;

const GameCanvas = styled.div`
  flex: 1;
  padding-top: 99px;
  background: linear-gradient(#212121, #303030 10px);
`;

const GameScreen = styled.div`
  height: 426px;
  background: #304d79;
`;

const SceneRow = styled.div`
  flex: none;
  height: 17px;
  display: flex;
  align-items: center;
  gap: 4px;
  padding: 2px 5px 0 4px;
  background: #b1b1b1;
  border-bottom: 1px solid #7c7c7c;
`;

const List = styled.div`
  flex: 1;
  border-bottom: 1px solid #666;
  margin-top: -1px;
`;

const ListRow = styled.div`
  display: flex;
  align-items: center;
  gap: 3px;
  height: 16px;
  overflow: hidden;
  padding-top: 2px;
  padding-left: ${(p) => p.$pl}px;
  background: ${(p) => (p.$selected ? "#727272" : "none")};
  color: ${(p) => (p.$selected ? "#c8c8c8" : "#000")};
`;

const FoldSlot = styled.span`
  flex: none;
  width: ${(p) => p.$w}px;
  margin-right: -3px;
`;

const ConsoleLog = styled.div`
  height: 439px;
  background: #b1b1b1;
  border-bottom: 1px solid #5c5c5c;
`;

const ConsoleDetail = styled.div`
  flex: 1;
  background: #b1b1b1;
`;

const ProjectBody = styled.div`
  flex: 1;
  display: flex;
  background: #9b9b9b;
`;

const Tree = styled.div`
  width: 110px;
  padding-top: 1px;
  border-right: 1px solid #6f6f6f;
  overflow: hidden;
`;

const TreeGap = styled.div`
  height: 15px;
`;

const Files = styled.div`
  flex: 1;
  overflow: hidden;
`;

const Crumb = styled.div`
  height: 19px;
  display: flex;
  align-items: center;
  gap: 8px;
  padding: 1px 0 0 6px;
  background: #b1b1b1;
  border-bottom: 1px solid #7c7c7c;
`;

const ObjectHeader = styled.div`
  flex: none;
  display: flex;
  height: 47px;
  background: #b1b1b1;
  border-bottom: 1px solid #5c5c5c;
`;

const BigCubeSvg = styled.svg`
  margin: 7px 0 0 5px;
`;

const HeaderRows = styled.div`
  flex: 1;
  display: flex;
  flex-direction: column;
  gap: 4px;
  padding: 7px 0 0 15px;
`;

const HeaderRow = styled.div`
  display: flex;
  align-items: center;
  height: ${(p) => p.$h}px;
`;

const CheckBox = styled.span`
  flex: none;
  display: block;
  width: 12px;
  height: 12px;
  border: 1px solid #5c5c5c;
  border-radius: 2px;
  background: ${(p) => (p.$on ? "linear-gradient(#6f8fb8, #8ba6c8)" : "linear-gradient(#c6c6c6, #a8a8a8)")};
  svg { margin: -1px; }
`;

const StaticLabel = styled.span`
  margin-left: 4px;
`;

const Field = styled.div`
  flex: 1;
  min-width: 0;
  height: 16px;
  line-height: 15px;
  padding-left: 2px;
  white-space: nowrap;
  letter-spacing: 0.2px;
  background: #a9a9a9;
  border: 1px solid #7d7d7d;
  border-top-color: #515151;
  ${(p) => p.$focus && "border-color: #3c55b4; box-shadow: inset 0 0 0 1px #8c97c4;"}
`;

const NameField = styled(Field)`
  flex: 0 0 660px;
  margin: 0 5px 0 6px;
  background: #adadad;
`;

const TagName = styled.span`
  width: ${(p) => (p.$mid ? 45 : 18)}px;
  padding-left: ${(p) => (p.$mid ? 6 : 0)}px;
  letter-spacing: 0.3px;
  text-indent: ${(p) => (p.$mid ? 0 : -8)}px;
`;

const Select = styled.div`
  ${metal}
  flex: none;
  display: flex;
  align-items: center;
  height: 15px;
  width: ${(p) => p.$w}px;
  margin-left: ${(p) => p.$ml || 0}px;
  padding: 0 4px 0 5px;
  border-color: #666;
  font-size: 9.500px;
  letter-spacing: 0.48px;
`;

const Section = styled.section`
  flex: none;
  height: ${(p) => p.$h}px;
  border-bottom: 1px solid #5c5c5c;
  overflow: hidden;
`;

const SectionTitle = styled.div`
  position: relative;
  display: flex;
  align-items: center;
  gap: 1px;
  height: ${(p) => p.$h}px;
  padding-left: 4px;
`;

const Title = styled.b`
  position: absolute;
  left: 49px;
  letter-spacing: 0.4px;
`;

const CheckInline = styled.span`
  margin-left: 4px;
`;

const HelpSlot = styled.span`
  position: relative;
  margin-left: auto;
  margin-right: ${(p) => (p.$inset ? 1 : -1)}px;
`;

const HelpMark = styled.span`
  position: absolute;
  left: 5px;
  top: 3px;
  font-size: 9px;
  line-height: 10px;
  color: #cdd9e8;
`;

const RectLayout = styled.div`
  display: flex;
  height: 64px;
  margin-top: -1px;
`;

const AnchorPreset = styled.div`
  width: 330px;
  ${Small} { display: block; padding-left: 23px; margin-bottom: 1px; }
`;

const AnchorRow = styled.div`
  display: flex;
`;

const Upright = styled.span`
  width: 13px;
  margin-left: 2px;
  writing-mode: vertical-rl;
  transform: rotate(180deg);
  font-size: 9.500px;
  line-height: 12px;
  letter-spacing: 0.3px;
  text-align: center;
`;

const RectFields = styled.div`
  flex: 1;
  margin-right: -4px;
`;

const FieldNames = styled.div`
  display: grid;
  grid-template-columns: 154px 155px 1fr;
  height: 16px;
  line-height: 16px;
  padding-left: 2px;
  letter-spacing: 0.3px;
  &:first-child { height: 15px; }
`;

const Blue = styled.span`
  color: #0e2fb8;
`;

const FieldLine = styled.div`
  display: grid;
  grid-template-columns: 152px 153px 1fr;
  gap: 2px;
`;

const BlueprintSlot = styled.div`
  display: flex;
  justify-content: flex-end;
  height: 16px;
`;

const BlueprintButton = styled.div`
  width: 20px;
  height: 17px;
  margin-top: -1px;
  padding: 3px 0 0 7px;
  background: #595959;
  border: 1px solid #3c3c3c;
  border-radius: 3px 0 0 3px;
  &::before {
    content: "";
    display: block;
    width: 11px;
    height: 10px;
    border: 1px dashed #222;
  }
`;

const AnchorsTitle = styled.div`
  display: flex;
  align-items: center;
  gap: 3px;
  height: 17px;
  padding-left: 3px;
`;

/* rows run a few pixels past the window edge, so no right border shows */
const PropRow = styled.div`
  display: grid;
  grid-template-columns: 328px 152px 153px 1fr;
  column-gap: 2px;
  height: 16px;
  align-items: center;
  margin-top: ${(p) => p.$mt || 0}px;
  margin-right: -4px;
`;

const PropName = styled.span`
  padding-left: ${(p) => (p.$indent ? 30 : 15)}px;
  letter-spacing: 0.3px;
  white-space: nowrap;
`;

const AxisCell = styled.div`
  display: flex;
  align-items: center;
`;

const AxisName = styled.span`
  width: 13px;
  padding-left: 2px;
  font-size: 10.500px;
`;

const CheckSlot = styled.span`
  padding-left: 2px;
`;

const ObjectField = styled(Field)`
  grid-column: 2 / -1;
  display: flex;
  align-items: center;
  gap: 2px;
  margin-left: 1px;
`;

const ColorField = styled.div`
  grid-column: 2 / -1;
  height: 16px;
  margin-left: 1px;
  background: #fff;
  border: 1px solid #515151;
  box-shadow: inset 0 1px #ccc;
`;

const WideButton = styled.div`
  ${metal}
  grid-column: 2 / -1;
  height: 15px;
  margin: 0 -30px 0 2px;
  text-align: center;
  border-color: #666;
  display: flex;
  align-items: center;
  justify-content: center;
`;

const MaterialSection = styled.div`
  flex: none;
  display: flex;
  height: 45px;
  background: #b1b1b1;
  border-bottom: 1px solid #6b6b6b;
`;

const FoldLow = styled.span`
  flex: none;
  padding: 31px 1px 0 5px;
`;

const Swatch = styled.div`
  flex: none;
  width: 32px;
  height: 32px;
  margin-top: 5px;
  border: 4px solid #464646;
  background: #cdcdcd;
`;

const MaterialRows = styled.div`
  flex: 1;
  min-width: 0;
  display: flex;
  flex-direction: column;
  gap: 3px;
  padding: 5px 0 0 8px;
`;

const Rule = styled.div`
  height: 7px;
  border-bottom: 1px solid #6b6b6b;
`;

const AddArea = styled.div`
  height: 181px;
  padding: 8px 0 0 280px;
`;

const AddButton = styled.div`
  ${metal}
  width: 230px;
  height: 23px;
  line-height: 20px;
  text-align: center;
  font-size: 12px;
  letter-spacing: 0.4px;
  padding-right: 3px;
`;

const PreviewBar = styled.div`
  display: flex;
  align-items: center;
  gap: 4px;
  height: 17px;
  padding: 1px 0 0 4px;
  background: linear-gradient(#5e5e5e, #444);
  border-top: 1px solid #3c3c3c;
  border-bottom: 1px solid #2c2c2c;
`;

const PreviewTitle = styled.b`
  color: #b9b9b9;
  letter-spacing: 0.55px;
`;

const Grip = styled.div`
  flex: 1;
  height: 4px;
  border-top: 1px solid #9a9a9a;
  border-bottom: 1px solid #9a9a9a;
  background: #333;
`;

const PreviewBody = styled.div`
  flex: 1;
  padding: 3px 0 0 238px;
  background: linear-gradient(#181818, #272727 14px);
`;

const PreviewImage = styled.div`
  width: 318px;
  height: 211px;
  background: #000;
`;
